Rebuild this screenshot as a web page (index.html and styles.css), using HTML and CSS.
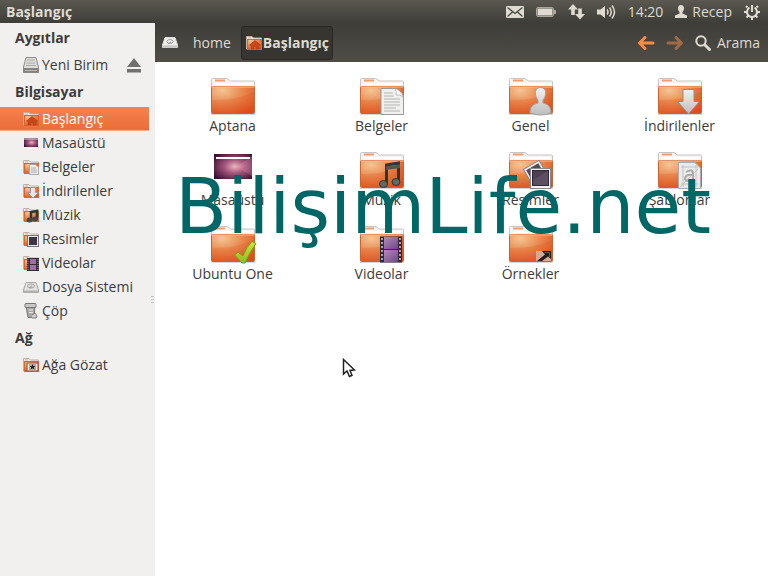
FILE: index.html
```html
<!DOCTYPE html>
<html lang="tr">
<head>
<meta charset="utf-8">
<meta name="viewport" content="width=device-width, initial-scale=1">
<title>Başlangıç</title>
<link rel="stylesheet" href="styles.css">
</head>
<body>
<svg class="defs" width="0" height="0" aria-hidden="true">
  <defs>
    <radialGradient id="orange" cx="0.25" cy="0.15" r="1"><stop offset="0" stop-color="#f4c594"/><stop offset="0.45" stop-color="#e98b52"/><stop offset="1" stop-color="#de4d1b"/></radialGradient>
    <linearGradient id="silver" x1="0" y1="0" x2="0" y2="1"><stop offset="0" stop-color="#f1f1f1"/><stop offset="1" stop-color="#bdbdbd"/></linearGradient>
    <radialGradient id="desk" cx="0.55" cy="0.5" r="0.65"><stop offset="0" stop-color="#e9b7bd"/><stop offset="0.4" stop-color="#a8587e"/><stop offset="1" stop-color="#3c1033"/></radialGradient>
    <linearGradient id="film" x1="0" y1="0" x2="1" y2="1"><stop offset="0" stop-color="#b58bb8"/><stop offset="1" stop-color="#6e4786"/></linearGradient>
    <linearGradient id="green" x1="0" y1="0" x2="0" y2="1"><stop offset="0" stop-color="#cbe83c"/><stop offset="1" stop-color="#8fbc1d"/></linearGradient>
    <symbol id="folder" viewBox="0 0 48 40">
      <path d="M2.500 10V3.500Q2.500 2.500 3.500 2.500H18L21.500 5H44.500Q45.500 5 45.500 6V11H2.500Z" fill="#f7f5f4" stroke="#c9c4c1"/>
      <path d="M6 4.500H16" stroke="#f59a6c" stroke-width="2"/>
      <path d="M6 8H43" stroke="#fff" stroke-width="2"/>
      <rect x="2.500" y="10.500" width="43" height="27" rx="1" fill="url(#orange)" stroke="#cf6330"/>
      <path d="M3 11H45" stroke="#f8c09c"/>
      <path d="M3 24Q25 25 45 16V37H3Z" fill="#d9460f" opacity="0.16"/>
      <path d="M2 38.500H46" stroke="#c9c4c1" opacity="0.7"/>
    </symbol>
    <symbol id="mini" viewBox="0 0 16 16">
      <path d="M.5 14V1.500H6L7.500 3H15.500V14Z" fill="#f4ece7" stroke="#bfb0a7"/>
      <path d="M2 3H5" stroke="#f1a176"/>
      <rect x="1.500" y="4.500" width="14" height="10" fill="url(#orange)" stroke="#d8662f"/>
    </symbol>
    <symbol id="drive" viewBox="0 0 16 16">
      <path d="M3 3.500H13L15.500 11V13.500H.5V11Z" fill="#e3e2e0" stroke="#aaa8a4"/>
      <path d="M.5 11.500H15.500V13.500H.5Z" fill="#b3b1ad"/>
      <ellipse cx="8" cy="7" rx="3.500" ry="2" fill="none" stroke="#a5a39f"/><path d="M6 9L9 7" stroke="#96948f"/>
    </symbol>
    <symbol id="drive-light" viewBox="0 0 16 16">
      <path d="M3 2.500H13L15.500 10V12.500H.5V10Z" fill="#eeedeb" stroke="#dddbd7"/>
      <path d="M1 11.500H15" stroke="#c3c1bd" stroke-width="2"/>
      <ellipse cx="8" cy="6.500" rx="3" ry="2" fill="none" stroke="#a5a39f"/><path d="M6 9L9 7" stroke="#96948f"/>
    </symbol>
    <symbol id="home" viewBox="0 0 16 16">
      <use href="#mini"/>
      <path d="M3.500 10L9 5.500L14.500 10L13 10.500V14H10V11.500H8V14H5V10.500Z" fill="#c9461c" stroke="#ae3a14" stroke-width="0.6"/>
    </symbol>
  </defs>
</svg>

<header class="panel">
  <h1 class="title">Başlangıç</h1>
  <div class="tray">
    <svg width="18" height="12" viewBox="0 0 18 12"><rect width="18" height="12" rx="1" fill="#dfdbd2"/><path d="M1.500 1.500L9 7.500L16.500 1.500M1.500 10.500L6.500 6M16.500 10.500L11.500 6" fill="none" stroke="#4a4843" stroke-width="1.300"/></svg>
    <svg width="20" height="10" viewBox="0 0 20 10"><rect x=".5" y=".5" width="17" height="9" rx="1.500" fill="none" stroke="#aaa69e"/><rect x="1.500" y="1.500" width="15" height="7" fill="#dfdbd2"/><path d="M19 3V7" stroke="#aaa69e" stroke-width="2"/></svg>
    <svg width="17" height="16" viewBox="0 0 17 16"><path d="M5 0L10 5.500H6.800V11H3.200V5.500H0ZM12 15.500L7 10H10.200V4.500H13.800V10H17Z" fill="#dfdbd2"/></svg>
    <svg width="19" height="16" viewBox="0 0 19 16"><path d="M0 5.500H3.500L8 2V14L3.500 10.500H0Z" fill="#dfdbd2"/><path d="M10 5.500Q12 8 10 10.500M12.500 3.500Q16 8 12.500 12.500M15 1.500Q20 8 15 14.500" fill="none" stroke="#dfdbd2" stroke-width="1.500"/></svg>
    <time>14:20</time>
    <span class="user"><svg width="12" height="13" viewBox="0 0 12 13"><path d="M6 0C8.200 0 9 1.700 9 3.500C9 5.500 8 6.500 7.500 7V8.500L12 10.500V13H0V10.500L4.500 8.500V7C4 6.500 3 5.500 3 3.500C3 1.700 3.800 0 6 0Z" fill="#dfdbd2"/></svg>Recep</span>
    <svg width="16" height="16" viewBox="0 0 16 16"><g fill="none" stroke="#dfdbd2" stroke-width="2"><path d="M5.500 3.700A5 5 0 1 0 10.500 3.700"/><path d="M8 1V8"/><path d="M3.500 3.500L2 2M12.500 3.500L14 2M3 8H0M13 8H16M4.500 11.500L2.500 13.500M11.500 11.500L13.500 13.500M8 13V16"/></g></svg>
  </div>
</header>

<div class="window">
  <nav class="sidebar" aria-label="Yerler">
    <h2>Aygıtlar</h2>
    <div class="row">
      <a class="place" href="#"><svg class="icon" viewBox="0 0 16 16"><path d="M3 .5H13L15.500 10V15.500H.5V10Z" fill="#deddda" stroke="#8e8c88"/><path d="M.5 11H15.500V15.500H.5Z" fill="#85837f"/><path d="M4 3H12M3.500 6H12.500M3 8.500H13" stroke="#aaa8a4"/><path d="M2 13.500H14" stroke="#b9b7b3"/></svg>Yeni Birim</a>
      <button class="eject" aria-label="Çıkar"><svg width="14" height="15" viewBox="0 0 14 15"><path d="M7 0L14 9H0ZM0 11H14V14.500H0Z" fill="#72706e"/></svg></button>
    </div>
    <h2>Bilgisayar</h2>
    <a class="place current" href="#" aria-current="page"><svg class="icon" viewBox="0 0 16 16"><use href="#home"/></svg>Başlangıç</a>
    <a class="place" href="#"><svg class="icon" viewBox="0 0 16 16"><rect x="1" y="3" width="14" height="9" fill="url(#desk)"/><path d="M1 4H15" stroke="#f3e4e8"/></svg>Masaüstü</a>
    <a class="place" href="#"><svg class="icon" viewBox="0 0 16 16"><use href="#mini"/><path d="M6.500 5.500H12L15.500 8V15.500H6.500Z" fill="#eee" stroke="#aaa"/><path d="M8 9H13M8 11H14M8 13H14" stroke="#aaa"/></svg>Belgeler</a>
    <a class="place" href="#"><svg class="icon" viewBox="0 0 16 16"><use href="#mini"/><path d="M7.500 4.500H12.500V9.500H15.500L10 15L4.500 9.500H7.500Z" fill="#e5e5e5" stroke="#999"/></svg>İndirilenler</a>
    <a class="place" href="#"><svg class="icon" viewBox="0 0 16 16"><use href="#mini"/><path d="M8 12V5L14 4V11" fill="none" stroke="#343331" stroke-width="2.500"/><ellipse cx="6.500" cy="13" rx="3" ry="2.500" fill="#484743"/><ellipse cx="12" cy="12" rx="3" ry="2.500" fill="#484743"/></svg>Müzik</a>
    <a class="place" href="#"><svg class="icon" viewBox="0 0 16 16"><use href="#mini"/><rect x="4.500" y="4.500" width="11" height="11" fill="#eee" stroke="#77717b"/><rect x="6" y="6" width="8" height="8" fill="#3e3447"/></svg>Resimler</a>
    <a class="place" href="#"><svg class="icon" viewBox="0 0 16 16"><use href="#mini"/><rect x="4" y="3" width="12" height="13" fill="#352a3a"/><path d="M7 4H13V9H7ZM7 10H13V15H7Z" fill="#a06fa6"/><path d="M5 4V16M15 4V16" stroke="#aaa1ad" stroke-dasharray="1 1"/></svg>Videolar</a>
    <a class="place" href="#"><svg class="icon" viewBox="0 0 16 16"><use href="#drive"/></svg>Dosya Sistemi</a>
    <a class="place" href="#"><svg class="icon" viewBox="0 0 16 16"><path d="M3 3H12L11 14.500H5Z" fill="#a9a8a6" stroke="#777572"/><rect x="2" y=".5" width="11" height="4" rx="1" fill="#c9c8c6" stroke="#777572"/><path d="M5.500 7H10M6 9.500H10" stroke="#e7e7e5"/><path d="M9 12L12 10L14 13L13 15H9" fill="#d2d1cf" stroke="#7d7b78"/></svg>Çöp</a>
    <h2>Ağ</h2>
    <a class="place" href="#"><svg class="icon" viewBox="0 0 16 16"><use href="#mini"/><rect x="4" y="6" width="11" height="8" fill="#ece8e5" stroke="#a54724"/><rect x="6" y="7" width="7" height="6" fill="#b5aaa5"/><path d="M9.500 7L10.300 9H12.500L10.800 10.300L11.500 12.500L9.500 11.200L7.500 12.500L8.200 10.300L6.500 9H8.700Z" fill="#222"/></svg>Ağa Gözat</a>
    <span class="grip"></span>
  </nav>

  <main class="content">
    <div class="toolbar">
      <div class="path">
        <button class="crumb" aria-label="Dosya Sistemi"><svg width="16" height="16" viewBox="0 0 16 16"><use href="#drive-light"/></svg></button>
        <button class="crumb">home</button>
        <button class="crumb active"><svg width="16" height="16" viewBox="0 0 16 16"><use href="#home"/></svg>Başlangıç</button>
      </div>
      <div class="actions">
        <button aria-label="Geri"><svg width="18" height="14" viewBox="0 0 18 14"><path d="M8 1.500L2.500 7L8 12.500M3 7H16" fill="none" stroke="#f68b43" stroke-width="3" stroke-linecap="round" stroke-linejoin="round"/></svg></button>
        <button aria-label="İleri"><svg width="18" height="14" viewBox="0 0 18 14"><path d="M10 1.500L15.500 7L10 12.500M15 7H2" fill="none" stroke="#a06a45" stroke-width="3" stroke-linecap="round" stroke-linejoin="round"/></svg></button>
        <button class="search"><svg width="16" height="16" viewBox="0 0 16 16"><circle cx="6" cy="6" r="4.700" fill="none" stroke="#dfdbd2" stroke-width="2"/><path d="M10 10L14.500 14.500" stroke="#dfdbd2" stroke-width="3" stroke-linecap="round"/></svg>Arama</button>
      </div>
    </div>

    <div class="files">
      <a class="file" href="#"><svg viewBox="0 0 48 40"><use href="#folder"/></svg><span>Aptana</span></a>
      <a class="file" href="#"><svg viewBox="0 0 48 40"><use href="#folder"/><path d="M23 12.500H37Q40 12.500 42 15Q45.500 18 45.500 21V38.500H23Z" fill="#f0f0ef" stroke="#999"/><path d="M37 12.500Q39 16 38 19Q42 18 45 21" fill="#fff" stroke="#bbb"/><path d="M26 17H35M26 20H36M26 23H42M26 26H42M26 29H42M26 32H38M26 35H42" stroke="#b4b4b4"/></svg><span>Belgeler</span></a>
      <a class="file" href="#"><svg viewBox="0 0 48 40"><use href="#folder"/><path d="M33.500 11.500C37.500 11.500 39 14.500 38.500 18C38.300 21 37 23 36 24V27C41 28.500 44 30 44 37Q39 39 33.500 39Q28 39 23 37C23 30 26 28.500 31 27V24C30 23 28.700 21 28.500 18C28 14.500 29.500 11.500 33.500 11.500Z" fill="url(#silver)" stroke="#a0a0a0"/></svg><span>Genel</span></a>
      <a class="file" href="#"><svg viewBox="0 0 48 40"><use href="#folder"/><path d="M27 13.500H38V25.500H43.500L32.500 38L21.500 25.500H27Z" fill="url(#silver)" stroke="#8e8e8e"/></svg><span>İndirilenler</span></a>
      <a class="file" href="#"><svg viewBox="0 0 48 40"><rect x="5" y="4" width="38" height="25" fill="url(#desk)"/><path d="M27 17L43 6V26Z" fill="#eb9ab5" opacity=".25"/><path d="M7 8H41" stroke="#fff" stroke-width="2"/></svg><span>Masaüstü</span></a>
      <a class="file" href="#"><svg viewBox="0 0 48 40"><use href="#folder"/><path d="M28.500 34V15L40.500 13V31" fill="none" stroke="#343432" stroke-width="3"/><path d="M28 16.500L42 14.500V18L28 20Z" fill="#555"/><ellipse cx="25.500" cy="34" rx="4" ry="3.500" fill="#666" stroke="#333"/><ellipse cx="38" cy="32" rx="4" ry="3.500" fill="#666" stroke="#333"/></svg><span>Müzik</span></a>
      <a class="file" href="#"><svg viewBox="0 0 48 40"><use href="#folder"/><g transform="rotate(-30 26 22)"><rect x="19" y="15" width="18" height="18" fill="#eee" stroke="#888"/><rect x="21" y="17" width="14" height="14" fill="#554958"/></g><rect x="23.500" y="18.500" width="20" height="20" fill="#f4f4f4" stroke="#8b888d"/><rect x="25.500" y="20.500" width="16" height="15" fill="#4d4052" stroke="#2f2834"/><path d="M26 30L41 21V35H26Z" fill="#75677a" opacity=".4"/></svg><span>Resimler</span></a>
      <a class="file" href="#"><svg viewBox="0 0 48 40"><use href="#folder"/><path d="M22.500 12.500H39L44.500 18V38.500H22.500Z" fill="#eaeaea" stroke="#aaa"/><path d="M25 17H42M25 34H42M27 15V37M40 15V37M24 37L42 19" stroke="#c4c4c4"/><path d="M30 22Q37 18 37 24V31M37 25Q29 24 29 29Q31 33 37 29" fill="none" stroke="#aaa" stroke-width="2"/></svg><span>Şablonlar</span></a>
      <a class="file" href="#"><svg viewBox="0 0 48 40"><use href="#folder"/><path d="M25.500 31L29 28L34 32Q37 23 43 17.500L47 19.500Q41 28 36 39H33Z" fill="url(#green)" stroke="#769c1b"/></svg><span>Ubuntu One</span></a>
      <a class="file" href="#"><svg viewBox="0 0 48 40"><use href="#folder"/><rect x="22" y="12.500" width="22" height="26" fill="#302937"/><rect x="26" y="13" width="14" height="12" fill="url(#film)"/><rect x="26" y="26" width="14" height="12" fill="url(#film)"/><path d="M24 14V38M42 14V38" stroke="#aaa3ad" stroke-width="2" stroke-dasharray="2 2"/></svg><span>Videolar</span></a>
      <a class="file" href="#"><svg viewBox="0 0 48 40"><use href="#folder"/><rect x="29" y="27" width="15" height="10" fill="#d9a98f"/><path d="M35 27H44V35L41 32.500L35 37H30L38 30.500Z" fill="#211b19"/><path d="M37.500 28.500H42.500V33" fill="none" stroke="#6b5f58"/></svg><span>Örnekler</span></a>
    </div>
  </main>
</div>

<div class="watermark">BilişimLife.net</div>
<svg class="pointer" width="14" height="20" viewBox="0 0 14 20"><path d="M1.500 1.500V16L5 13L7.500 18.500L10 17.300L8 12.500L12.500 12Z" fill="#fff" stroke="#222" stroke-width="1.500"/></svg>
</body>
</html>
```

FILE: styles.css
```css
* {
  box-sizing: border-box;
}

body {
  margin: 0;
  min-height: 100vh;
  display: flex;
  flex-direction: column;
  background: #fff;
  color: #3c3c3c;
  font: 14px/18px "Open Sans", "Noto Sans", sans-serif;
}

a {
  color: inherit;
  text-decoration: none;
}

button {
  display: flex;
  align-items: center;
  padding: 0;
  border: 0;
  background: none;
  color: inherit;
  font: inherit;
}

svg {
  display: block;
  flex: none;
}

.defs {
  position: absolute;
}

.panel {
  display: flex;
  align-items: center;
  justify-content: space-between;
  height: 23px;
  padding: 0 8px 0 6px;
  background: linear-gradient(#5a5850, #3e3d38);
  color: #dfdbd2;
}

.title {
  margin: 0;
  font-size: 14px;
  line-height: 18px;
}

.tray {
  display: flex;
  align-items: center;
  gap: 12px;
}

.user {
  display: flex;
  align-items: center;
  gap: 5px;
}

.window {
  flex: 1;
  display: grid;
  grid-template-columns: 155px 1fr;
}

.sidebar {
  position: relative;
  border-right: 1px solid #f0edec;
  background: #f2f0ef;
}

.sidebar h2 {
  margin: 0;
  padding-left: 15px;
  font-size: 14px;
  line-height: 30px;
}

.row {
  display: flex;
  align-items: center;
  justify-content: space-between;
  padding-right: 13px;
}

.place {
  display: flex;
  align-items: center;
  gap: 3px;
  height: 24px;
  margin-right: 5px;
  padding-left: 23px;
  white-space: nowrap;
}

.current {
  background: linear-gradient(#f4824f, #ec6c3b);
  border-bottom: 1px solid #f8a88b;
  color: #fff;
}

.icon {
  width: 16px;
  height: 16px;
}

.grip {
  position: absolute;
  right: 0;
  top: 273px;
  width: 3px;
  height: 8px;
  background: repeating-linear-gradient(#c6c3c0 0 1px, transparent 1px 3px);
}

.toolbar {
  display: flex;
  align-items: center;
  justify-content: space-between;
  height: 39px;
  padding: 0 8px 0 7px;
  background: linear-gradient(#3e3d39, #504d47);
  color: #dfdbd2;
}

.path,
.actions {
  display: flex;
  align-items: center;
}

.crumb {
  height: 34px;
  margin-right: 10px;
}

.crumb:first-child {
  margin-right: 15px;
}

.active {
  gap: 1px;
  padding: 0 3px 0 4px;
  border: 1px solid #292826;
  border-radius: 3px;
  background: #36352f;
  font-weight: bold;
}

.actions {
  gap: 11px;
}

.search {
  gap: 6px;
}

.files {
  display: grid;
  grid-template-columns: repeat(4, 1fr);
  gap: 15px 0;
  padding: 14px 14px 14px 3px;
}

.file {
  display: flex;
  flex-direction: column;
  align-items: center;
  gap: 1px;
}

.file svg {
  width: 48px;
  height: 40px;
}

.watermark {
  position: absolute;
  left: 175px;
  top: 162px;
  color: #006666;
  font: 76px/90px "DejaVu Sans", sans-serif;
  pointer-events: none;
}

.pointer {
  position: absolute;
  left: 342px;
  top: 358px;
}
```
